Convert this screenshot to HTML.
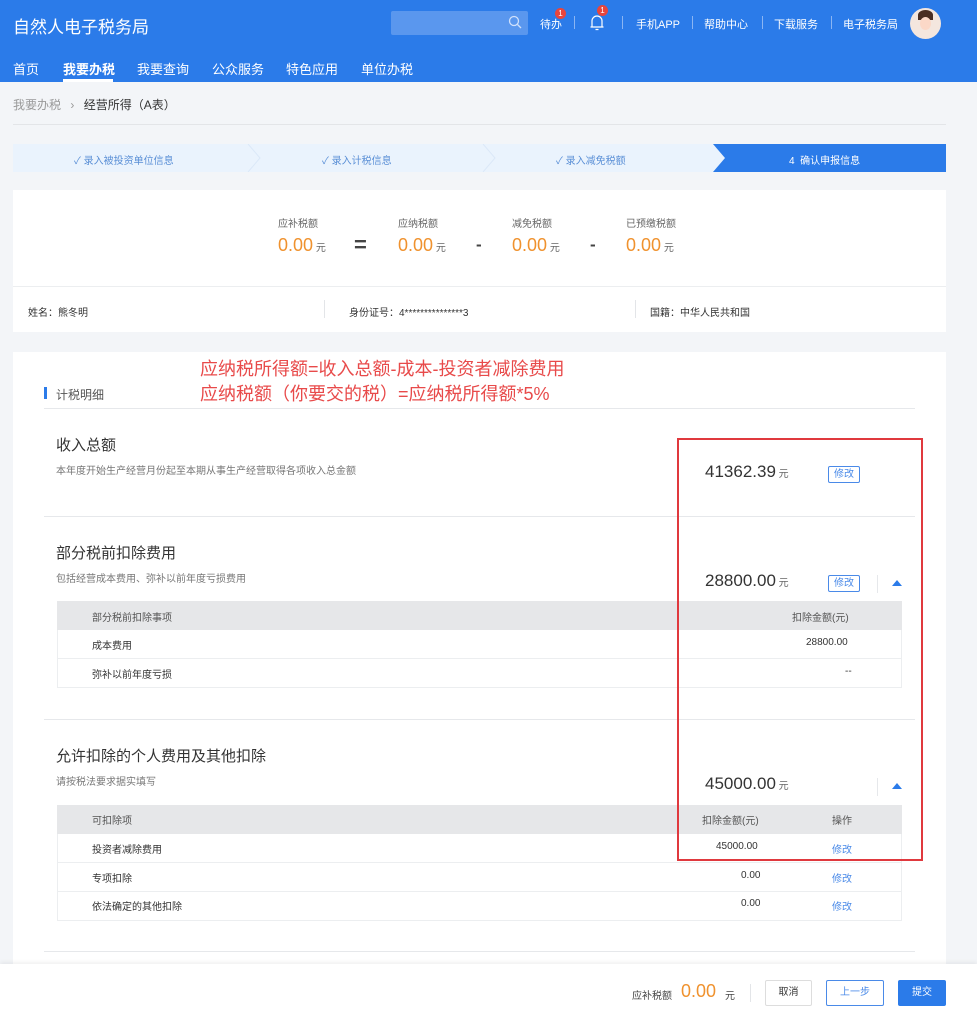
<!DOCTYPE html>
<html><head><meta charset="utf-8"><style>
*{margin:0;padding:0;box-sizing:border-box}
body{width:977px;height:1024px;position:relative;overflow:hidden;background:#f3f5f8;font-family:"Liberation Sans","Noto Sans CJK SC",sans-serif;color:#333}
.a{position:absolute;white-space:nowrap}
.hd{position:absolute;left:0;top:0;width:977px;height:82px;background:#2b7be9}
.w{color:#fff}
.card{position:absolute;background:#fff}
.or{color:#f0922e}
.th{position:absolute;left:57px;width:845px;height:29px;background:#e6e7e9}
.tr{position:absolute;left:57px;width:845px;height:29px;border:1px solid #eceef0;border-top:none;background:#fff}
.btn{position:absolute;border:1px solid #4a8ae8;color:#4a8ae8;font-size:10px;text-align:center;border-radius:2px}
.sep{position:absolute;left:44px;width:871px;height:1px;background:#e6e8eb}
.tri{position:absolute;width:0;height:0;border-left:5px solid transparent;border-right:5px solid transparent;border-bottom:6px solid #2b7be9}
</style></head><body>
<div class="hd"></div>
<div class="a w" style="left:13px;top:13px;font-size:17px">自然人电子税务局</div>
<div class="a" style="left:391px;top:11px;width:137px;height:24px;background:#5a97ee;border-radius:2px"></div>
<svg class="a" style="left:508px;top:15px" width="14" height="14"><circle cx="6" cy="6" r="4.5" fill="none" stroke="#cfe0fb" stroke-width="1.3"/><path d="M9.5 9.5L13 13" stroke="#cfe0fb" stroke-width="1.3"/></svg>
<div class="a w" style="left:540px;top:16px;font-size:11px">待办</div>
<div class="a" style="left:555px;top:8px;width:11px;height:11px;border-radius:50%;background:#e8453c;color:#fff;font-size:8px;text-align:center;line-height:11px">1</div>
<svg class="a" style="left:589px;top:12px" width="16" height="20"><path d="M3 15V9a5 5 0 0 1 10 0v6zM1.5 15h13M6.5 17.5h3" fill="none" stroke="#fff" stroke-width="1.2"/></svg>
<div class="a" style="left:597px;top:5px;width:11px;height:11px;border-radius:50%;background:#e8453c;color:#fff;font-size:8px;text-align:center;line-height:11px">1</div>
<div class="a w" style="left:636px;top:16px;font-size:11px">手机APP</div>
<div class="a w" style="left:704px;top:16px;font-size:11px">帮助中心</div>
<div class="a w" style="left:774px;top:16px;font-size:11px">下载服务</div>
<div class="a w" style="left:843px;top:16px;font-size:11px">电子税务局</div>
<div class="a" style="left:574px;top:16px;width:1px;height:13px;background:#8ab5f3"></div>
<div class="a" style="left:622px;top:16px;width:1px;height:13px;background:#8ab5f3"></div>
<div class="a" style="left:692px;top:16px;width:1px;height:13px;background:#8ab5f3"></div>
<div class="a" style="left:762px;top:16px;width:1px;height:13px;background:#8ab5f3"></div>
<div class="a" style="left:831px;top:16px;width:1px;height:13px;background:#8ab5f3"></div>
<div class="a" style="left:910px;top:8px;width:31px;height:31px;border-radius:50%;background:#f4e6de;overflow:hidden"><div style="position:absolute;left:8px;top:2px;width:15px;height:10px;border-radius:50% 50% 0 0;background:#4a2e22"></div><div style="position:absolute;left:10px;top:9px;width:11px;height:13px;border-radius:50%;background:#fbd8c7"></div></div>
<div class="a w" style="left:13px;top:59px;font-size:13px">首页</div>
<div class="a w" style="left:63px;top:59px;font-size:13px;font-weight:bold">我要办税</div>
<div class="a" style="left:63px;top:79px;width:50px;height:3px;background:#fff"></div>
<div class="a w" style="left:137px;top:59px;font-size:13px">我要查询</div>
<div class="a w" style="left:212px;top:59px;font-size:13px">公众服务</div>
<div class="a w" style="left:286px;top:59px;font-size:13px">特色应用</div>
<div class="a w" style="left:361px;top:59px;font-size:13px">单位办税</div>

<div class="a" style="left:13px;top:96px;font-size:12px;color:#999">我要办税 <span style="margin:0 6px">›</span> <span style="color:#333">经营所得（A表）</span></div>
<div class="a" style="left:13px;top:124px;width:933px;height:1px;background:#e3e5e8"></div>

<div class="a" style="left:13px;top:144px;width:933px;height:28px;background:#eaf3fd"></div>
<svg class="a" style="left:13px;top:144px" width="933" height="28"><path d="M235 0l12 14-12 14M470 0l12 14-12 14" fill="none" stroke="#dbe8f8"/><path d="M700 0H933V28H700L712 14Z" fill="#2b7be9"/></svg>
<div class="a" style="left:74px;top:152px;font-size:10px;color:#5a8fd6">✓ 录入被投资单位信息</div>
<div class="a" style="left:322px;top:152px;font-size:10px;color:#5a8fd6">✓ 录入计税信息</div>
<div class="a" style="left:556px;top:152px;font-size:10px;color:#5a8fd6">✓ 录入减免税额</div>
<div class="a w" style="left:789px;top:152px;font-size:10px">4&nbsp;&nbsp;确认申报信息</div>

<div class="card" style="left:13px;top:190px;width:933px;height:96px"></div>
<div class="a" style="left:278px;top:215px;font-size:10px;color:#666">应补税额</div>
<div class="a" style="left:398px;top:215px;font-size:10px;color:#666">应纳税额</div>
<div class="a" style="left:512px;top:215px;font-size:10px;color:#666">减免税额</div>
<div class="a" style="left:626px;top:215px;font-size:10px;color:#666">已预缴税额</div>
<div class="a or" style="left:278px;top:235px;font-size:18px">0.00<span style="font-size:10px;color:#666"> 元</span></div>
<div class="a" style="left:354px;top:232px;font-size:22px;font-weight:bold;color:#444">=</div>
<div class="a or" style="left:398px;top:235px;font-size:18px">0.00<span style="font-size:10px;color:#666"> 元</span></div>
<div class="a" style="left:476px;top:235px;font-size:17px;font-weight:bold;color:#444">-</div>
<div class="a or" style="left:512px;top:235px;font-size:18px">0.00<span style="font-size:10px;color:#666"> 元</span></div>
<div class="a" style="left:590px;top:235px;font-size:17px;font-weight:bold;color:#444">-</div>
<div class="a or" style="left:626px;top:235px;font-size:18px">0.00<span style="font-size:10px;color:#666"> 元</span></div>
<div class="card" style="left:13px;top:287px;width:933px;height:45px"></div>
<div class="a" style="left:13px;top:286px;width:933px;height:1px;background:#eceef0"></div>
<div class="a" style="left:28px;top:304px;font-size:10px">姓名：熊冬明</div>
<div class="a" style="left:324px;top:300px;width:1px;height:18px;background:#e3e5e8"></div>
<div class="a" style="left:349px;top:304px;font-size:10px">身份证号：4***************3</div>
<div class="a" style="left:635px;top:300px;width:1px;height:18px;background:#e3e5e8"></div>
<div class="a" style="left:650px;top:304px;font-size:10px">国籍：中华人民共和国</div>

<div class="card" style="left:13px;top:352px;width:933px;height:620px"></div>
<div class="a" style="left:200px;top:357px;font-size:18px;color:#e84a4a;line-height:25px">应纳税所得额=收入总额-成本-投资者减除费用<br>应纳税额（你要交的税）=应纳税所得额*5%</div>
<div class="a" style="left:44px;top:387px;width:3px;height:12px;background:#2b7be9"></div>
<div class="a" style="left:56px;top:386px;font-size:12px;color:#555">计税明细</div>
<div class="sep" style="top:408px"></div>

<div class="a" style="left:56px;top:434px;font-size:15px">收入总额</div>
<div class="a" style="left:56px;top:462px;font-size:10px;color:#777">本年度开始生产经营月份起至本期从事生产经营取得各项收入总金额</div>
<div class="a" style="left:705px;top:462px;font-size:17px">41362.39<span style="font-size:10px;color:#666"> 元</span></div>
<div class="btn" style="left:828px;top:466px;width:32px;height:17px;line-height:15px">修改</div>
<div class="sep" style="top:516px"></div>

<div class="a" style="left:56px;top:542px;font-size:15px">部分税前扣除费用</div>
<div class="a" style="left:56px;top:570px;font-size:10px;color:#777">包括经营成本费用、弥补以前年度亏损费用</div>
<div class="a" style="left:705px;top:571px;font-size:17px">28800.00<span style="font-size:10px;color:#666"> 元</span></div>
<div class="btn" style="left:828px;top:575px;width:32px;height:17px;line-height:15px">修改</div>
<div class="a" style="left:877px;top:575px;width:1px;height:18px;background:#e6e8eb"></div>
<div class="tri" style="left:892px;top:580px"></div>
<div class="th" style="top:601px"></div>
<div class="a" style="left:92px;top:609px;font-size:10px;color:#555">部分税前扣除事项</div>
<div class="a" style="left:792px;top:609px;font-size:10px;color:#555">扣除金额(元)</div>
<div class="tr" style="top:630px"></div>
<div class="a" style="left:92px;top:637px;font-size:10px">成本费用</div>
<div class="a" style="left:806px;top:637px;font-size:10px">28800.00</div>
<div class="tr" style="top:659px"></div>
<div class="a" style="left:92px;top:666px;font-size:10px">弥补以前年度亏损</div>
<div class="a" style="left:845px;top:666px;font-size:10px">--</div>
<div class="sep" style="top:719px"></div>

<div class="a" style="left:56px;top:745px;font-size:15px">允许扣除的个人费用及其他扣除</div>
<div class="a" style="left:56px;top:773px;font-size:10px;color:#777">请按税法要求据实填写</div>
<div class="a" style="left:705px;top:774px;font-size:17px">45000.00<span style="font-size:10px;color:#666"> 元</span></div>
<div class="a" style="left:877px;top:778px;width:1px;height:18px;background:#e6e8eb"></div>
<div class="tri" style="left:892px;top:783px"></div>
<div class="th" style="top:805px"></div>
<div class="a" style="left:92px;top:812px;font-size:10px;color:#555">可扣除项</div>
<div class="a" style="left:702px;top:812px;font-size:10px;color:#555">扣除金额(元)</div>
<div class="a" style="left:832px;top:812px;font-size:10px;color:#555">操作</div>
<div class="tr" style="top:834px"></div>
<div class="a" style="left:92px;top:841px;font-size:10px">投资者减除费用</div>
<div class="a" style="left:716px;top:841px;font-size:10px">45000.00</div>
<div class="a" style="left:832px;top:841px;font-size:10px;color:#4a8ae8">修改</div>
<div class="tr" style="top:863px"></div>
<div class="a" style="left:92px;top:870px;font-size:10px">专项扣除</div>
<div class="a" style="left:741px;top:870px;font-size:10px">0.00</div>
<div class="a" style="left:832px;top:870px;font-size:10px;color:#4a8ae8">修改</div>
<div class="tr" style="top:892px"></div>
<div class="a" style="left:92px;top:898px;font-size:10px">依法确定的其他扣除</div>
<div class="a" style="left:741px;top:898px;font-size:10px">0.00</div>
<div class="a" style="left:832px;top:898px;font-size:10px;color:#4a8ae8">修改</div>
<div class="sep" style="top:951px"></div>

<div class="a" style="left:677px;top:438px;width:246px;height:423px;border:2px solid #e0393e"></div>

<div class="a" style="left:0;top:964px;width:977px;height:60px;background:#fff;box-shadow:0 -2px 4px rgba(0,0,0,.06)"></div>
<div class="a" style="left:632px;top:987px;font-size:10px;color:#444">应补税额</div>
<div class="a or" style="left:681px;top:981px;font-size:18px">0.00</div>
<div class="a" style="left:725px;top:987px;font-size:10px;color:#444">元</div>
<div class="a" style="left:750px;top:984px;width:1px;height:18px;background:#e3e5e8"></div>
<div class="a" style="left:765px;top:980px;width:47px;height:26px;border:1px solid #ddd;border-radius:2px;font-size:10px;text-align:center;line-height:24px">取消</div>
<div class="a" style="left:826px;top:980px;width:58px;height:26px;border:1px solid #4a8ae8;color:#4a8ae8;border-radius:2px;font-size:10px;text-align:center;line-height:24px">上一步</div>
<div class="a" style="left:898px;top:980px;width:48px;height:26px;background:#2b7be9;color:#fff;border-radius:2px;font-size:10px;text-align:center;line-height:26px">提交</div>
</body></html>
